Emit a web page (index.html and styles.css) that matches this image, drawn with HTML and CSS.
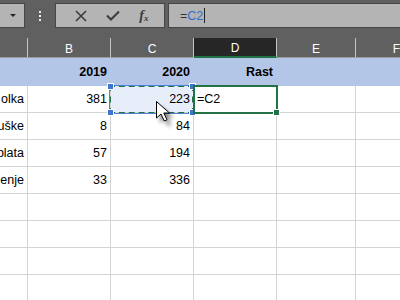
FILE: index.html
```html
<html>
<head>
<meta charset="utf-8">
<title>Rast - Excel</title>
<link rel="stylesheet" href="styles.css">
</head>
<body>
<div class="fbar">
  <div class="namebox"><span class="drop"></span></div>
  <div class="grip"><i></i><i></i><i></i></div>
  <div class="fbtns">
    <svg width="12" height="12" viewBox="0 0 12 12"><path d="M1 1 L11 11 M11 1 L1 11" stroke="#3c3c3c" stroke-width="1.6" fill="none"/></svg>
    <svg width="14" height="11" viewBox="0 0 14 11"><path d="M1 5.5 L5 9.5 L13 1.5" stroke="#3c3c3c" stroke-width="2" fill="none"/></svg>
    <span class="fx">f<sub>x</sub></span>
  </div>
  <div class="finput"><span class="eq">=</span><span class="ref">C2</span><span class="tcaret"></span></div>
</div>

<div class="sheet">
  <div class="row head">
    <div class="c a"></div><div class="c">B</div><div class="c">C</div><div class="c on">D</div><div class="c e">E</div><div class="c f">F</div>
  </div>
  <div class="row blue">
    <div class="c a"></div><div class="c">2019</div><div class="c">2020</div><div class="c">Rast</div><div class="c e"></div><div class="c f"></div>
  </div>
  <div class="row">
    <div class="c a"><span>olka</span></div><div class="c">381</div><div class="c refcell">223</div><div class="c left">=C2</div><div class="c e"></div><div class="c f"></div>
  </div>
  <div class="row">
    <div class="c a"><span>uške</span></div><div class="c">8</div><div class="c">84</div><div class="c"></div><div class="c e"></div><div class="c f"></div>
  </div>
  <div class="row">
    <div class="c a"><span>plata</span></div><div class="c">57</div><div class="c">194</div><div class="c"></div><div class="c e"></div><div class="c f"></div>
  </div>
  <div class="row">
    <div class="c a"><span>enje</span></div><div class="c">33</div><div class="c">336</div><div class="c"></div><div class="c e"></div><div class="c f"></div>
  </div>
  <div class="row">
    <div class="c a"></div><div class="c"></div><div class="c"></div><div class="c"></div><div class="c e"></div><div class="c f"></div>
  </div>
  <div class="row">
    <div class="c a"></div><div class="c"></div><div class="c"></div><div class="c"></div><div class="c e"></div><div class="c f"></div>
  </div>
  <div class="row">
    <div class="c a"></div><div class="c"></div><div class="c"></div><div class="c"></div><div class="c e"></div><div class="c f"></div>
  </div>
  <div class="row">
    <div class="c a"></div><div class="c"></div><div class="c"></div><div class="c"></div><div class="c e"></div><div class="c f"></div>
  </div>

  <!-- reference box round C2 -->
  <div class="refbox">
    <i class="h tl"></i><i class="h tr"></i><i class="h bl"></i><i class="h br"></i>
  </div>
  <!-- active cell D2 -->
  <div class="active"><i class="fill"></i></div>
  <svg class="mouse" width="24" height="30" viewBox="0 0 24 30">
    <defs><filter id="sh" x="-50%" y="-50%" width="200%" height="200%"><feGaussianBlur stdDeviation="2"/></filter></defs>
    <path d="M2 2 L2 19 L6.5 14.5 L10 22 L13 21 L9.5 13.5 L15.5 13.5 Z" fill="#000" opacity="0.5" filter="url(#sh)" transform="translate(3 4)"/>
    <path d="M1.5 1.5 L1.5 18 L6 14 L9.3 21 L12 19.8 L8.8 13 L14.5 13 Z" fill="#fff" stroke="#000" stroke-width="1"/>
  </svg>
</div>
</body>
</html>
```

FILE: styles.css
```css
html,body{
  margin:0;
  padding:0;
  background:#fff;
  font-family:"Liberation Sans",Arial,sans-serif;
  overflow:hidden;
}

/* formula bar */
.fbar{
  height:38px;
  background:#606060;
  display:flex;
  align-items:flex-start;
  padding-top:3px;
  box-sizing:border-box;
}
.namebox{
  width:26px;
  height:25px;
  margin-left:-1px;
  background:#b4b4b4;
  border:1px solid #464646;
  border-left:none;
  box-sizing:border-box;
  display:flex;
  align-items:center;
  justify-content:flex-end;
  padding-right:8px;
}
.drop{
  width:0;height:0;
  border-left:3px solid transparent;
  border-right:3px solid transparent;
  border-top:3px solid #222;
}
.grip{
  width:30px;
  display:flex;
  flex-direction:column;
  align-items:center;
  gap:2px;
  padding-top:8px;
}
.grip i{width:2px;height:2px;background:#eee;display:block}
.fbtns{
  width:110px;
  height:25px;
  background:#b4b4b4;
  border:1px solid #464646;
  box-sizing:border-box;
  display:flex;
  align-items:center;
  justify-content:space-around;
  padding:0 6px 0 10px;
}
.fx{
  font-family:"Liberation Serif",serif;
  font-style:italic;
  font-weight:bold;
  font-size:14px;
  color:#3c3c3c;
}
.fx sub{font-size:9px;vertical-align:-1px}
.finput{
  flex:1;
  margin-left:3px;
  height:25px;
  background:#b4b4b4;
  border:1px solid #464646;
  border-right:none;
  box-sizing:border-box;
  display:flex;
  align-items:center;
  padding-left:11px;
  font-size:12.5px;
}
.eq{color:#333}
.ref{color:#2f6fd0}
.tcaret{width:1px;height:15px;background:#222;margin-left:1px}

/* grid */
.sheet{position:relative}
.row{display:flex;height:27px}
.c{
  width:83px;
  flex:none;
  box-sizing:border-box;
  border-right:1px solid #d4d4d4;
  border-bottom:1px solid #d4d4d4;
  display:flex;
  align-items:center;
  justify-content:flex-end;
  padding-right:3px;
  font-size:12.5px;
  color:#000;
  overflow:hidden;
  white-space:nowrap;
}
.c.a{width:28px}
.c.e{width:79px}
.c.f{flex:1;border-right:none}
.c.left{justify-content:flex-start;padding-left:3px}
.c.a span{flex:none}

.head{height:20px}
.head .c{
  background:#606060;
  color:#fff;
  justify-content:center;
  padding:0;
  font-size:12px;
  border-right:1px solid #c4c4c4;
  border-bottom:1px solid #9c9c9c;
  padding-top:2px;
}
.head .c.on{
  background:#262626;
  border-bottom:2px solid #217346;
}
.head .c.f{justify-content:flex-end;padding-right:0;border-right:none}

.blue{height:28px}
.blue .c{
  background:#b4c6e7;
  border-color:#b4c6e7;
  font-weight:bold;
  border-bottom:none;
}

.refcell{background:#e8eef9}

/* overlays */
.refbox{
  position:absolute;
  left:109px;
  top:47px;
  width:85px;
  height:29px;
  box-sizing:border-box;
  border:2px dashed #217346;
  outline:1px solid #4f81d8;
  outline-offset:-1px;
}
.h{
  position:absolute;
  width:5px;height:5px;
  background:#3f74d4;
  border:1px solid #fff;
  display:block;
}
.h.tl{left:-4px;top:-4px}
.h.tr{right:-4px;top:-4px}
.h.bl{left:-4px;bottom:-4px}
.h.br{right:-4px;bottom:-4px}

.active{
  position:absolute;
  left:193px;
  top:47px;
  width:85px;
  height:29px;
  box-sizing:border-box;
  border:2px solid #217346;
}
.fill{
  position:absolute;
  right:-4px;bottom:-4px;
  width:5px;height:5px;
  background:#217346;
  border:1px solid #fff;
  display:block;
}
.mouse{
  position:absolute;
  left:155px;
  top:62px;
}
```
